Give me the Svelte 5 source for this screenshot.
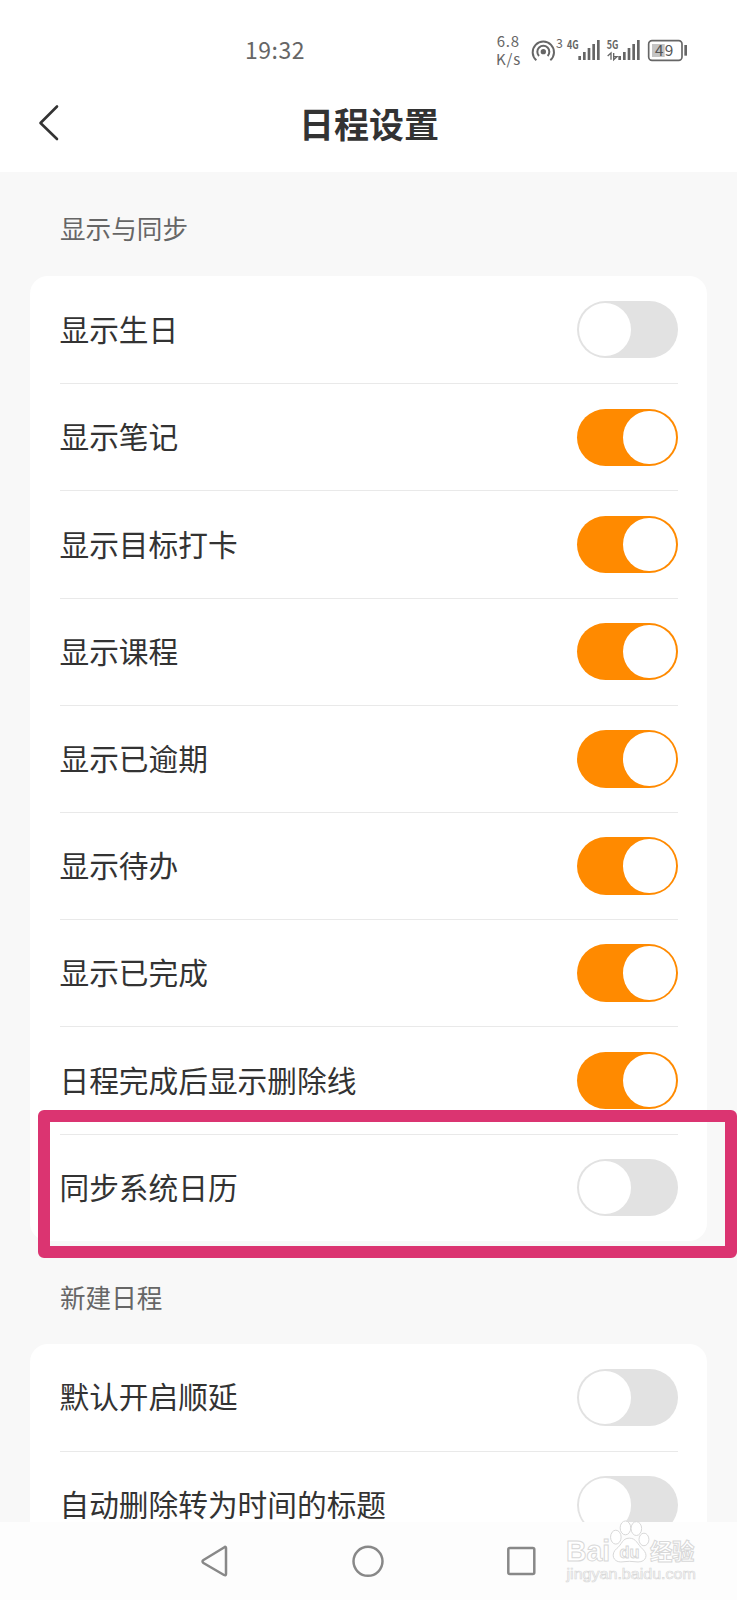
<script lang="ts">
  type Setting = { name: string; on: boolean }
  type Section = { title: string; settings: Setting[] }

  let sections = $state<Section[]>([
    {
      title: '显示与同步',
      settings: [
        { name: '显示生日', on: false },
        { name: '显示笔记', on: true },
        { name: '显示目标打卡', on: true },
        { name: '显示课程', on: true },
        { name: '显示已逾期', on: true },
        { name: '显示待办', on: true },
        { name: '显示已完成', on: true },
        { name: '日程完成后显示删除线', on: true },
        { name: '同步系统日历', on: false },
      ],
    },
    {
      title: '新建日程',
      settings: [
        { name: '默认开启顺延', on: false },
        { name: '自动删除转为时间的标题', on: false },
      ],
    },
  ])
</script>

<div class="screen">
  <div class="status-bar">
    <span class="time">19:32</span>
    <svg class="status-icons" viewBox="0 0 660 180" fill="none" stroke="#666">
      <g fill="#666" stroke="none">
        <text x="50" y="81" font-size="45" textLength="67">6.8</text>
        <text x="48" y="135" font-size="45" textLength="73">K/s</text>
        <text x="228" y="83" font-size="37">3</text>
        <text class="net" x="261" y="87" font-size="36" textLength="35" lengthAdjust="spacingAndGlyphs">4G</text>
        <text class="net" x="380" y="86" font-size="36" textLength="35" lengthAdjust="spacingAndGlyphs">5G</text>
        <circle cx="190" cy="95" r="8" />
      </g>
      <path d="M169 121 A32 32 0 1 1 211 121" stroke-width="6" />
      <path d="M177 108 A18 18 0 1 1 203 108" stroke-width="6" />
      <path d="M299 108V120M313 96V120M327 84V120M341 72V120M355 60V120" stroke-width="8" />
      <path d="M419 108V120M433 96V120M447 84V120M461 72V120M475 60V120" stroke-width="8" />
      <path d="M383 108L393 99V119M401 99V119L411 110H401" stroke-width="4" />
      <rect x="516" y="72" width="38" height="39" fill="#c4c4c4" stroke="none" />
      <rect x="506" y="62" width="100" height="59" rx="10" stroke-width="5" />
      <path d="M617 75V107" stroke-width="8" />
      <text x="525" y="108" font-size="46" textLength="55" fill="#555" stroke="none">49</text>
    </svg>
  </div>

  <header>
    <svg class="back" viewBox="0 0 24 40" fill="none" stroke="#333" stroke-width="2.6" stroke-linecap="round" stroke-linejoin="round">
      <path d="M20 3.500L3.500 20L20 36" />
    </svg>
    <h1>日程设置</h1>
  </header>

  <main>
    {#each sections as section}
      <h2>{section.title}</h2>
      <ul class="card">
        {#each section.settings as setting}
          <li>
            <span>{setting.name}</span>
            <button
              class="toggle"
              class:on={setting.on}
              aria-label={setting.name}
              onclick={() => (setting.on = !setting.on)}
            >
              <i></i>
            </button>
          </li>
        {/each}
      </ul>
    {/each}
  </main>

  <nav>
    <svg viewBox="0 0 36 36"><path d="M29 5.500V32Q29 34 27 33L6.500 21Q4.500 19.300 6.500 18L27 5.500Q29 4 29 6Z" /></svg>
    <svg viewBox="0 0 36 36"><circle cx="18" cy="19.300" r="14.500" /></svg>
    <svg viewBox="0 0 36 36"><rect x="5.300" y="6" width="26" height="26" rx="1.500" /></svg>
  </nav>

  <div class="highlight"></div>

  <svg class="watermark" viewBox="0 0 591 260" fill="#fff" stroke="#d8d8d8" stroke-width="3">
    <ellipse cx="227" cy="70" rx="16" ry="21" />
    <ellipse cx="256" cy="42" rx="16" ry="21" />
    <ellipse cx="289" cy="44" rx="16" ry="21" />
    <ellipse cx="312" cy="77" rx="15" ry="19" />
    <path d="M268 73C246 73 246 92 230 104C210 121 219 145 242 145Q268 141 294 145C320 145 325 122 309 107C292 92 289 73 268 73Z" />
    <text x="76" y="143" font-size="90" font-weight="700" textLength="134" lengthAdjust="spacingAndGlyphs">Bai</text>
    <text x="238" y="133" font-size="52" font-weight="700" textLength="60" lengthAdjust="spacingAndGlyphs">du</text>
    <text class="cjk" x="330" y="138" font-size="68" font-weight="700" textLength="135">经验</text>
    <text x="78" y="195" font-size="45" stroke-width="2" textLength="391" lengthAdjust="spacingAndGlyphs">jingyan.baidu.com</text>
  </svg>
</div>

<style>
  :global(body) { margin: 0; }
  .screen { position: relative; display: flex; flex-direction: column; width: 737px; height: 1600px; overflow: hidden; background: #f8f8f8; color: #333; font-family: "Noto Sans CJK SC", sans-serif; }

  .status-bar { display: flex; justify-content: space-between; flex: none; height: 60px; padding: 20px 37px 0 245px; background: #fff; }
  .time { line-height: 58px; font-size: 23px; letter-spacing: 0.5px; color: #666; }
  .status-icons { width: 220px; height: 60px; }
  .net { font-weight: 700; }

  header { display: grid; grid-template-columns: 64px 1fr 64px; align-items: center; flex: none; height: 92px; box-sizing: border-box; padding-bottom: 7px; background: #fff; }
  .back { width: 24px; height: 40px; margin-left: 37px; }
  h1 { margin: 0; padding-left: 1px; text-align: center; font-size: 35px; line-height: 50px; font-weight: 700; }

  main { flex: 1; min-height: 0; overflow: hidden; padding: 0 30px; }
  h2 { height: 103px; box-sizing: border-box; margin: 0; padding: 9px 0 0 30px; line-height: 94px; font-size: 25.600px; font-weight: 400; color: #666; }
  h2:first-child { height: 104px; }
  .card { margin: 0; padding: 0 29.500px; list-style: none; border-radius: 18px; background: #fff; }
  .card li { display: flex; align-items: center; justify-content: space-between; height: 107.200px; box-sizing: border-box; font-size: 29.700px; }
  .card li + li { border-top: 1px solid #e9e9e9; }
  .card span { padding-bottom: 2px; line-height: 1; }
  .toggle { display: flex; box-sizing: border-box; width: 101px; height: 57.500px; padding: 2px; border: 0; border-radius: 29px; background: #e2e2e2; cursor: pointer; }
  .toggle i { width: 52.500px; height: 53.500px; border-radius: 50%; background: #fff; }
  .toggle.on { justify-content: flex-end; background: #ff8a00; }

  nav { display: flex; justify-content: center; gap: 117px; flex: none; height: 78px; box-sizing: border-box; padding: 20px 1px 0 0; background: #fdfdfd; }
  nav svg { width: 36px; height: 36px; fill: none; stroke: #888; stroke-width: 2.500; }

  /* frame drawn over the calendar sync row */
  .highlight { position: absolute; left: 38px; top: 1110px; width: 699px; height: 148px; box-sizing: border-box; border: 12px solid #db3471; border-radius: 6px; pointer-events: none; }
  .watermark { position: absolute; left: 540px; top: 1514px; width: 197px; height: 86px; font-family: "Liberation Sans", sans-serif; pointer-events: none; }
  .cjk { font-family: "Noto Sans CJK SC", sans-serif; }
</style>
